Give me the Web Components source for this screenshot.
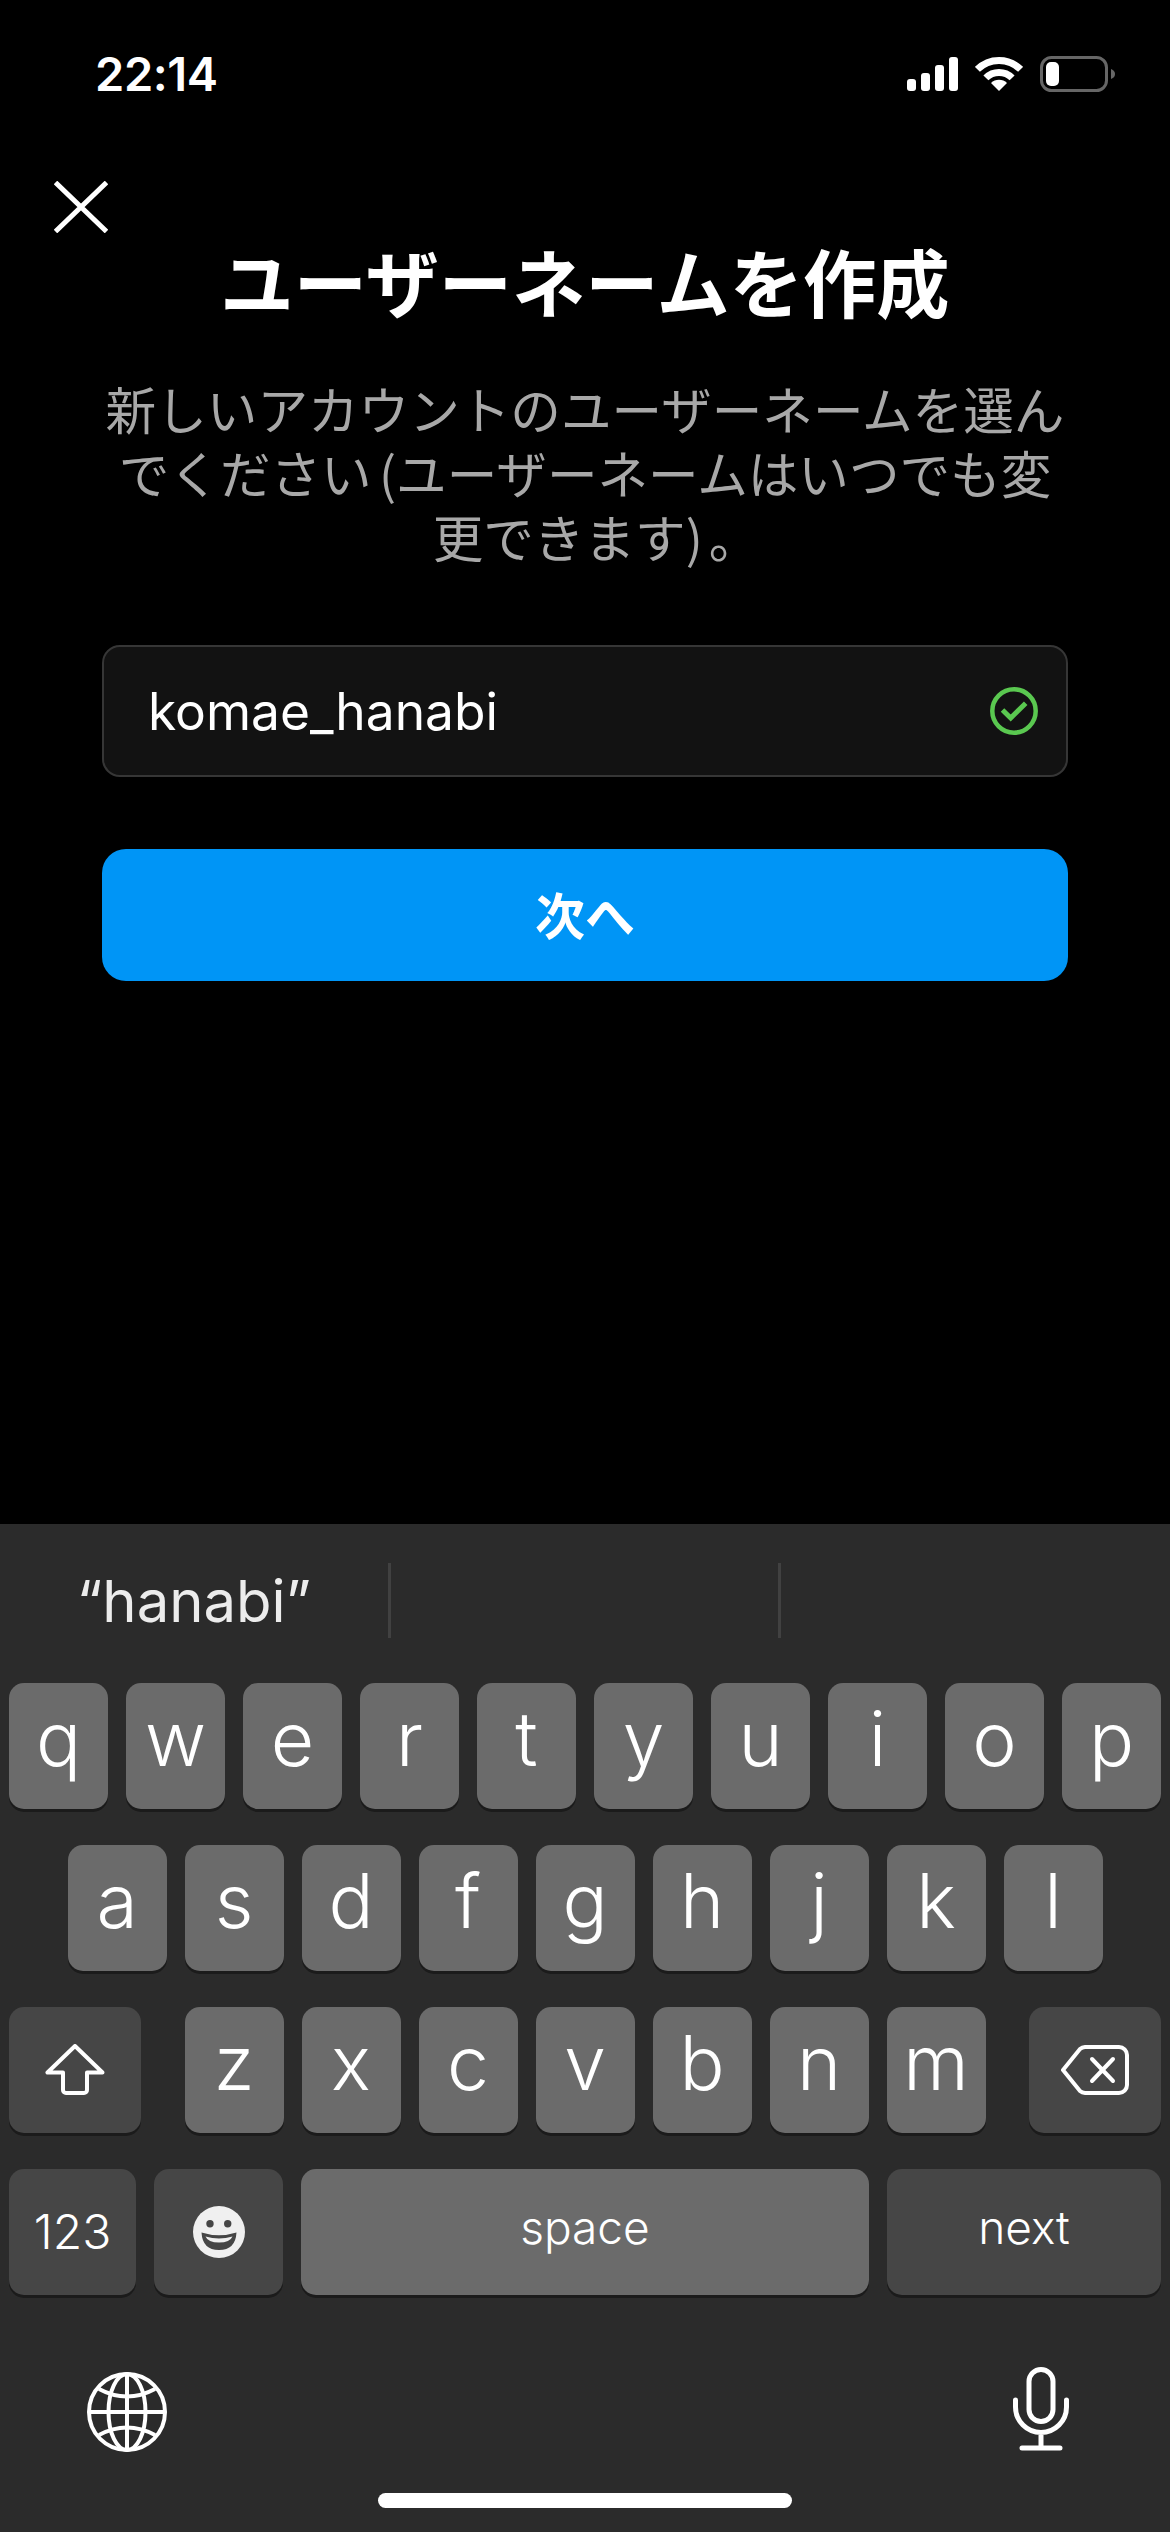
<!DOCTYPE html>
<html lang="ja">
<head>
<meta charset="utf-8">
<title>ユーザーネームを作成</title>
<style>
    html, body { margin: 0; background: #000; }
    body { width: 1170px; height: 2532px; overflow: hidden; }
    signup-screen { height: 2532px; }
</style>
</head>
<body>
<signup-screen>
    <status-bar slot="status" time="22:14"></status-bar>
    <username-form slot="form" value="komae_hanabi" action="次へ">
        <span slot="title">ユーザーネームを作成</span>
        <span slot="hint">新しいアカウントのユーザーネームを選んでください (ユーザーネームはいつでも変更できます)<span style="margin:0 -22px 0 6px">。</span></span>
    </username-form>
    <ios-keyboard slot="keyboard" suggestion="“hanabi”"></ios-keyboard>
</signup-screen>

<script>
class SignupScreen extends HTMLElement {
    constructor() {
        super()
        this.attachShadow({ mode: 'open' })
        this.shadowRoot.innerHTML = `
            <style>
                :host { display: flex; flex-direction: column; background: #000; }
                .main { flex: 1; }
            </style>
            <slot name="status"></slot>
            <div class="main"><slot name="form"></slot></div>
            <slot name="keyboard"></slot>
        `
    }
}

class StatusBar extends HTMLElement {
    constructor() {
        super()
        this.attachShadow({ mode: 'open' })
        this.shadowRoot.innerHTML = `
            <style>
                :host {
                    display: flex;
                    justify-content: space-between;
                    height: 120px;
                    box-sizing: border-box;
                    padding: 56px 55px 0 95px;
                    color: #fff;
                }
                .time {
                    font: 600 47px/36px Inter, "Liberation Sans", sans-serif;
                    letter-spacing: -0.4px;
                }
                .icons { display: flex; gap: 17px; height: 36px; }
                svg { display: block; }
            </style>
            <div class="time">${this.getAttribute('time')}</div>
            <div class="icons">
                <svg width="51" height="36" viewBox="0 0 51 36" fill="#fff">
                    <rect x="0" y="23" width="9" height="12" rx="3"/>
                    <rect x="14" y="17" width="9" height="18" rx="3"/>
                    <rect x="28" y="9" width="9" height="26" rx="3"/>
                    <rect x="42" y="1" width="9" height="34" rx="3"/>
                </svg>
                <svg width="48" height="36" viewBox="0 0 48 36">
                    <g fill="none" stroke="#fff" stroke-width="7">
                        <path d="M2.4 13.4a30.5 30.5 0 0 1 43.2 0"/>
                        <path d="M10.9 21.9a18.5 18.5 0 0 1 26.2 0"/>
                    </g>
                    <path d="M24 35l-8-8a11.3 11.3 0 0 1 16 0z" fill="#fff"/>
                </svg>
                <svg width="75" height="36" viewBox="0 0 75 36">
                    <rect x="1.5" y="1.5" width="65" height="33" rx="10" fill="none" stroke="#666" stroke-width="3"/>
                    <rect x="6" y="6" width="13" height="24" rx="5" fill="#fff"/>
                    <path d="M71 13c3 1 4 3 4 5s-1 4-4 5z" fill="#666"/>
                </svg>
            </div>
        `
    }
}

class UsernameForm extends HTMLElement {
    constructor() {
        super()
        this.attachShadow({ mode: 'open' })
        this.shadowRoot.innerHTML = `
            <style>
                :host { display: block; color: #fff; font-family: "Noto Sans CJK JP", sans-serif; }
                .close { display: block; margin: 61px 0 0 54px; }
                .body {
                    display: flex;
                    flex-direction: column;
                    align-items: center;
                    padding: 0 102px;
                }
                h1 {
                    margin: 4px 0 0;
                    font-size: 73.3px;
                    line-height: 86px;
                    font-weight: 700;
                    white-space: nowrap;
                }
                p {
                    margin: 53px 0 0;
                    width: 966px;
                    font-size: 50.6px;
                    line-height: 64px;
                    word-spacing: -4px;
                    color: #a8a8a8;
                    text-align: center;
                }
                .field {
                    display: flex;
                    align-items: center;
                    justify-content: space-between;
                    box-sizing: border-box;
                    width: 100%;
                    height: 132px;
                    margin-top: 77px;
                    padding: 0 28px 0 44px;
                    background: #121212;
                    border: 2px solid #363636;
                    border-radius: 18px;
                    font: 400 51.5px Inter, "Liberation Sans", sans-serif;
                }
                .next {
                    display: flex;
                    align-items: center;
                    justify-content: center;
                    box-sizing: border-box;
                    width: 100%;
                    height: 132px;
                    margin-top: 72px;
                    padding-bottom: 5px;
                    background: #0095f6;
                    border-radius: 24px;
                    font-size: 50px;
                    font-weight: 700;
                }
                svg { flex: none; }
            </style>
            <svg class="close" width="54" height="52" viewBox="0 0 54 52">
                <path d="M1.5 1.5L52.5 50.5M52.5 1.5L1.5 50.5" stroke="#fff" stroke-width="5" fill="none"/>
            </svg>
            <div class="body">
                <h1><slot name="title"></slot></h1>
                <p><slot name="hint"></slot></p>
                <div class="field">
                    <span>${this.getAttribute('value')}</span>
                    <svg width="48" height="48" viewBox="0 0 48 48" fill="none" stroke="#5ac850" stroke-width="4.5">
                        <circle cx="24" cy="24" r="21.700"/>
                        <path d="M12.500 23L20.700 31L35.700 16.300" stroke-width="5"/>
                    </svg>
                </div>
                <div class="next">${this.getAttribute('action')}</div>
            </div>
        `
    }
}

class KbKey extends HTMLElement {
    constructor() {
        super()
        this.attachShadow({ mode: 'open' })
        this.shadowRoot.innerHTML = `
            <style>
                :host {
                    display: flex;
                    align-items: center;
                    justify-content: center;
                    flex: none;
                    box-sizing: border-box;
                    width: 99px;
                    height: 126px;
                    padding-bottom: 16px;
                    background: #6b6b6b;
                    border-radius: 15px;
                    box-shadow: 0 3px 0 #1b1b1b;
                    color: #fff;
                    font: 300 75px/1 Inter, "Liberation Sans", sans-serif;
                }
                :host([fn]) { background: #464646; }
                :host([small]) { font-size: 46px; font-weight: 350; padding-bottom: 10px; }
                :host([icon]) { padding-bottom: 0; }
            </style>
            <slot></slot>
        `
    }
}

class IosKeyboard extends HTMLElement {
    constructor() {
        super()
        this.attachShadow({ mode: 'open' })
        const keys = (s) => [...s].map((c) => `<kb-key>${c}</kb-key>`).join('')
        this.shadowRoot.innerHTML = `
            <style>
                :host {
                    display: block;
                    height: 1008px;
                    background: #2b2b2b;
                    color: #fff;
                }
                .suggest {
                    display: grid;
                    grid-template-columns: 388px 3px 387px 3px 1fr;
                    align-items: center;
                    box-sizing: border-box;
                    height: 159px;
                    padding-bottom: 6px;
                    font: 400 58px Inter, "Liberation Sans", sans-serif;
                    color: #ececec;
                }
                .suggest span { text-align: center; }
                .suggest i { height: 75px; background: #414141; }
                .rows { display: flex; flex-direction: column; gap: 36px; padding: 0 9px; }
                .row { display: flex; gap: 18px; justify-content: center; }
                .row.between { justify-content: space-between; }
                .letters { display: flex; gap: 18px; }
                .tools {
                    display: flex;
                    justify-content: space-between;
                    align-items: flex-end;
                    margin-top: 72px;
                    padding: 0 101px 0 87px;
                }
                .mic { margin-bottom: 1px; }
                .home {
                    width: 414px;
                    height: 15px;
                    margin: 41px auto 0;
                    background: #fff;
                    border-radius: 8px;
                }
                svg { display: block; }
            </style>
            <div class="suggest">
                <span>${this.getAttribute('suggestion')}</span><i></i><span></span><i></i><span></span>
            </div>
            <div class="rows">
                <div class="row">${keys('qwertyuiop')}</div>
                <div class="row">${keys('asdfghjkl')}</div>
                <div class="row between">
                    <kb-key fn icon style="width:132px">
                        <svg width="60" height="52" viewBox="0 0 60 52" fill="none" stroke="#fff" stroke-width="4" stroke-linejoin="round">
                            <path d="M30 2L2.500 28.500H18V46a3 3 0 0 0 3 3H39a3 3 0 0 0 3-3V28.500H57.500z"/>
                        </svg>
                    </kb-key>
                    <div class="letters">${keys('zxcvbnm')}</div>
                    <kb-key fn icon style="width:132px">
                        <svg width="68" height="50" viewBox="0 0 68 50" fill="none" stroke="#fff" stroke-width="4" stroke-linecap="round" stroke-linejoin="round">
                            <path d="M24 2H58a8 8 0 0 1 8 8V40a8 8 0 0 1-8 8H24a8 8 0 0 1-5-2L2 25L19 4a8 8 0 0 1 5-2z"/>
                            <path d="M31 14L52 36M52 14L31 36"/>
                        </svg>
                    </kb-key>
                </div>
                <div class="row">
                    <kb-key fn small style="width:127px;font-size:48px;padding-bottom:0">123</kb-key>
                    <kb-key fn icon style="width:129px">
                        <svg width="52" height="52" viewBox="0 0 52 52">
                            <circle cx="26" cy="26" r="26" fill="#f0f0f0"/>
                            <circle cx="17" cy="17.700" r="3.700" fill="#464646"/>
                            <circle cx="34.700" cy="17.700" r="3.700" fill="#464646"/>
                            <path d="M8.500 26.500Q26 32 43.500 26.500Q42.500 44 26 44Q9.500 44 8.500 26.500z" fill="#464646"/>
                            <path d="M12.500 30.500Q26 34.500 39.500 30.500Q37 36.500 26 36.500Q15 36.500 12.500 30.500z" fill="#f0f0f0"/>
                        </svg>
                    </kb-key>
                    <kb-key small style="flex:1">space</kb-key>
                    <kb-key fn small style="width:274px">next</kb-key>
                </div>
            </div>
            <div class="tools">
                <svg width="80" height="80" viewBox="0 0 80 80" fill="none" stroke="#fff" stroke-width="4">
                    <circle cx="40" cy="40" r="38"/>
                    <ellipse cx="40" cy="40" rx="18.500" ry="38"/>
                    <path d="M40 2V78M2 40H78"/>
                    <path d="M12 17Q40 32 68 17M12 63Q40 48 68 63"/>
                </svg>
                <svg class="mic" width="56" height="84" viewBox="0 0 56 84" fill="none" stroke="#fff" stroke-width="5" stroke-linecap="round">
                    <rect x="16" y="2.500" width="24" height="52" rx="12"/>
                    <path d="M2.500 33V40a25.500 25.500 0 0 0 51 0V33M28 66V81M9 81H47"/>
                </svg>
            </div>
            <div class="home"></div>
        `
    }
}

window.customElements.define('kb-key', KbKey)
window.customElements.define('signup-screen', SignupScreen)
window.customElements.define('status-bar', StatusBar)
window.customElements.define('username-form', UsernameForm)
window.customElements.define('ios-keyboard', IosKeyboard)
</script>
</body>
</html>
